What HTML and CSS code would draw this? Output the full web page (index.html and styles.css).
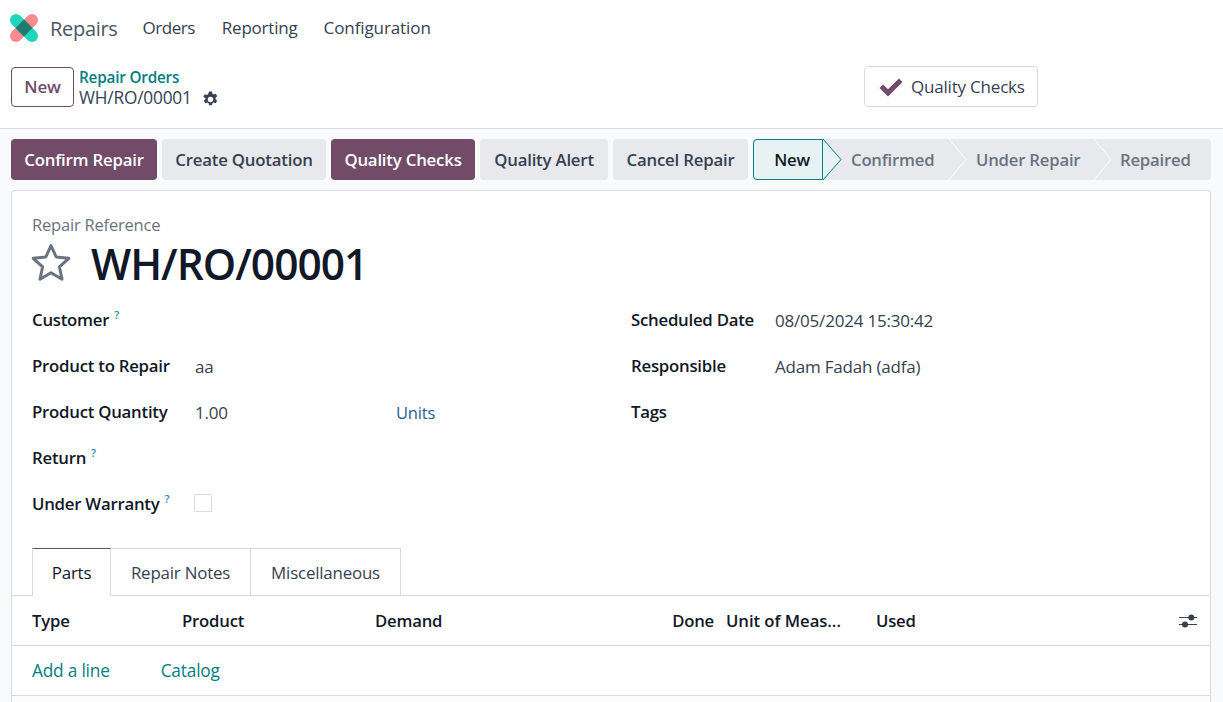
FILE: index.html
```html
<!DOCTYPE html>
<html lang="en">
<head>
<meta charset="utf-8">
<title>Repairs</title>
<link rel="stylesheet" href="styles.css">
</head>
<body>
<nav class="nav">
  <svg class="logo" viewBox="0 0 28 28" width="28" height="28">
    <path d="M6 22 22 6" stroke="#ff8a8f" stroke-width="12" stroke-linecap="round"/>
    <path d="M6 6 22 22" stroke="#1fd6bb" stroke-width="12" stroke-linecap="round"/>
    <path d="M14 5.500 22.500 14 14 22.500 5.500 14z" fill="#1f7a70"/>
  </svg>
  <span class="brand">Repairs</span>
  <a class="menu first">Orders</a>
  <a class="menu">Reporting</a>
  <a class="menu last">Configuration</a>
</nav>
<header class="panel">
  <button class="btn-new">New</button>
  <div class="crumbs">
    <a class="crumb-link">Repair Orders</a>
    <div class="crumb-current">WH/RO/00001
      <svg class="gear" viewBox="0 0 16 16" width="17" height="17"><path fill="#374151" fill-rule="evenodd" d="M6.600.5h2.800l.4 2 1.200.7 1.900-.7 1.400 2.400-1.500 1.300v1.600l1.500 1.300-1.400 2.400-1.900-.7-1.200.7-.4 2H6.600l-.4-2-1.200-.7-1.900.7-1.400-2.400 1.500-1.300V6.700L1.200 5.400 2.600 3l1.900.7 1.200-.7zM8 5.400a2.600 2.600 0 1 0 0 5.200 2.600 2.600 0 0 0 0-5.200z"/></svg>
    </div>
  </div>
  <button class="btn-stat">
    <svg viewBox="0 0 24 20" width="24" height="20"><path fill="#714b67" d="M9 19.500 0.500 11l3.600-3.600L9 12.300 19.900 1.500l3.600 3.600z"/></svg>
    Quality Checks
  </button>
</header>
<main class="content">
  <div class="actions">
    <button class="btn primary">Confirm Repair</button>
    <button class="btn">Create Quotation</button>
    <button class="btn primary">Quality Checks</button>
    <button class="btn">Quality Alert</button>
    <button class="btn">Cancel Repair</button>
    <div class="status">
      <span class="step current">New
        <svg class="arrow" viewBox="0 0 19 41" width="19" height="41"><path d="M0 0 18 20.500 0 41" fill="#e6f2f3" stroke="#017e84"/></svg>
      </span>
      <span class="step s2">Confirmed
        <svg class="arrow" viewBox="0 0 19 41" width="19" height="41"><path d="M0 0 17 20.500 0 41" fill="#e7e9ed" stroke="#fff"/></svg>
      </span>
      <span class="step s3">Under Repair
        <svg class="arrow" viewBox="0 0 19 41" width="19" height="41"><path d="M0 0 17 20.500 0 41" fill="#e7e9ed" stroke="#fff"/></svg>
      </span>
      <span class="step s4">Repaired</span>
    </div>
  </div>
  <section class="sheet">
    <div class="title-block">
      <div class="ref-label">Repair Reference</div>
      <div class="title-row">
        <svg class="star" viewBox="0 0 40 38" width="40" height="38"><path d="M20 2.500 25.200 14 37.800 15.300 28.400 23.800 31 36.200 20 29.800 9 36.200 11.600 23.800 2.200 15.300 14.800 14z" fill="none" stroke="#6b7280" stroke-width="3" stroke-linejoin="round"/></svg>
        <h1>WH/RO/00001</h1>
      </div>
    </div>
    <div class="fields">
      <div class="col-left">
        <div class="row"><label>Customer<sup>?</sup></label></div>
        <div class="row"><label>Product to Repair</label><span class="val">aa</span></div>
        <div class="row"><label>Product Quantity</label><span class="val qty">1.00</span><a class="units">Units</a></div>
        <div class="row"><label>Return<sup>?</sup></label></div>
        <div class="row"><label>Under Warranty<sup>?</sup></label><span class="check"></span></div>
      </div>
      <div class="col-right">
        <div class="row"><label>Scheduled Date</label><span class="val">08/05/2024 15:30:42</span></div>
        <div class="row"><label>Responsible</label><span class="val">Adam Fadah (adfa)</span></div>
        <div class="row"><label>Tags</label></div>
      </div>
    </div>
    <div class="tabs">
      <a class="tab active">Parts</a>
      <a class="tab">Repair Notes</a>
      <a class="tab">Miscellaneous</a>
    </div>
    <div class="thead">
      <span class="c-type">Type</span>
      <span class="c-product">Product</span>
      <span class="c-demand">Demand</span>
      <span class="c-done">Done</span>
      <span class="c-uom">Unit of Meas...</span>
      <span class="c-used">Used</span>
      <svg class="sliders" viewBox="0 0 18 14" width="18" height="14"><path d="M0 3.500h18M0 10.500h18" stroke="#374151" stroke-width="1.200"/><circle cx="12.300" cy="3.500" r="3" fill="#374151"/><circle cx="6" cy="10.500" r="3" fill="#374151"/></svg>
    </div>
    <div class="tadd">
      <a>Add a line</a>
      <a class="catalog">Catalog</a>
    </div>
    <div class="tfoot"></div>
  </section>
</main>
</body>
</html>
```
FILE: styles.css
```css
* { box-sizing: border-box; }
html, body { margin: 0; height: 702px; overflow: hidden; }
body {
  background: #fff;
  color: #374151;
  font-family: "Open Sans", "Noto Sans", "Liberation Sans", sans-serif;
  font-size: 16px;
  letter-spacing: -0.2px;
}
button { font: inherit; letter-spacing: inherit; cursor: pointer; }

.nav { display: flex; align-items: center; height: 56px; padding-left: 10px; }
.logo { flex: none; }
.brand { margin-left: 12px; font-size: 20px; color: #4b5563; letter-spacing: -0.3px; }
.menu { color: #374151; margin: 0 0 2px 27px; font-size: 17px; }
.menu.first { margin-left: 25px; letter-spacing: -0.500px; }
.menu.last { margin-left: 26px; letter-spacing: -0.100px; }

.panel {
  display: flex;
  align-items: center;
  height: 73px;
  padding: 0 0 11px 11px;
  border-bottom: 1px solid #d8dadd;
}
.btn-new {
  width: 63px; height: 40px;
  border: 1px solid #714b67; border-radius: 4px;
  background: #fff; color: #714b67;
  font-weight: 600; font-size: 17px;
}
.crumbs { margin-left: 5px; width: 785px; padding-top: 2px; }
.crumb-link { display: block; color: #017e84; font-weight: 600; font-size: 15.300px; line-height: 20px; }
.crumb-current { display: flex; align-items: center; gap: 10px; font-size: 17.300px; line-height: 22px; color: #374151; }
.gear { flex: none; margin-top: 4px; }
.btn-stat {
  display: flex; align-items: center; gap: 8px;
  width: 174px; height: 41px; padding: 0 0 0 14px;
  border: 1px solid #d8dadd; border-radius: 4px;
  background: #fff; color: #374151; font-size: 17px;
}

.content { background: #f9fafb; height: 573px; padding: 10px 12px 0 11px; }
.actions { display: flex; gap: 5px; height: 41px; }
.btn {
  height: 41px; padding: 0;
  border: 0; border-radius: 4px;
  background: #e7e9ed; color: #374151;
  font-weight: 600; font-size: 16.800px;
}
.btn:nth-child(1) { width: 146px; }
.btn:nth-child(2) { width: 164px; }
.btn:nth-child(3) { width: 144px; }
.btn:nth-child(4) { width: 128px; }
.btn:nth-child(5) { width: 135px; }
.btn.primary { background: #714b67; color: #fff; }

.status {
  display: flex; flex: 1;
  background: #e7e9ed; border-radius: 4px;
  color: #6b7280; font-weight: 600; font-size: 16.700px;
}
.step { position: relative; display: flex; align-items: center; height: 41px; }
.arrow { position: absolute; top: 0; left: 100%; z-index: 1; }
.step.current {
  width: 70px; justify-content: center; padding-left: 8px;
  background: #e6f2f3; color: #111827;
  border: 1px solid #017e84; border-radius: 4px 0 0 4px;
}
.step.current .arrow { top: -1px; margin-left: 1px; }
.s2 { width: 126px; padding-left: 28px; }
.s3 { width: 145px; padding-left: 27px; }
.s4 { padding-left: 26px; }

.sheet {
  height: 520px; margin-top: 10px;
  background: #fff;
  border: 1px solid #d8dadd; border-bottom: 0; border-radius: 4px 4px 0 0;
}
.title-block { padding: 24px 20px 0; }
.ref-label { color: #6b7280; font-size: 16.500px; line-height: 20px; }
.title-row { display: flex; align-items: center; gap: 19px; height: 54px; }
.star { flex: none; margin-left: -1px; }
h1 { margin: 4px 0 0 1px; font-size: 42.500px; font-weight: 600; color: #111827; letter-spacing: -1px; line-height: 52px; }

.fields { display: flex; padding: 7px 20px 0; height: 259px; }
.col-left { width: 599px; }
.row { display: flex; align-items: center; height: 46px; }
.row label { color: #111827; font-weight: 600; font-size: 16.800px; letter-spacing: -0.250px; width: 163px; flex: none; }
.col-right .row label { width: 144px; }
.val { font-size: 17px; color: #374151; margin-top: 2px; }
.qty { width: 201px; }
.units { color: #1f5f8b; font-size: 16.500px; margin-top: 2px; }
sup { color: #1b8cb0; font-size: 11px; font-weight: 600; margin-left: 5px; vertical-align: 7px; line-height: 0; }
.check { width: 18px; height: 18px; margin-left: -1px; border: 1px solid #d8dadd; border-radius: 1px; background: #fff; }

.tabs { display: flex; padding-left: 20px; height: 48px; border-bottom: 1px solid #d8dadd; }
.tab {
  display: flex; align-items: center; justify-content: center;
  height: 48px;
  border: 1px solid #d8dadd; border-left: 0; border-bottom: 0;
  color: #374151; font-size: 16.900px;
}
.tab:nth-child(1) { width: 79px; }
.tab:nth-child(2) { width: 140px; }
.tab:nth-child(3) { width: 150px; }
.tab.active {
  border-left: 1px solid #d8dadd; border-top-color: #714b67;
  background: #fff; height: 48px; color: #111827;
}
.thead {
  display: grid;
  grid-template-columns: 150px 193px 297px 54px 150px 1fr auto;
  align-items: center;
  height: 50px; padding: 0 13px 0 20px;
  border-bottom: 1px solid #d8dadd;
  color: #111827; font-weight: 600; font-size: 16.700px;
}
.c-uom { letter-spacing: -0.050px; white-space: nowrap; }
.c-done { text-align: right; padding-right: 12px; margin-left: -12px; }
.tadd {
  display: flex; align-items: center; gap: 51px;
  height: 50px; padding-left: 20px;
  border-bottom: 1px solid #d8dadd;
  color: #017e84; font-size: 17.300px;
}
.tfoot { height: 10px; background: #fcfcfc; }
```
